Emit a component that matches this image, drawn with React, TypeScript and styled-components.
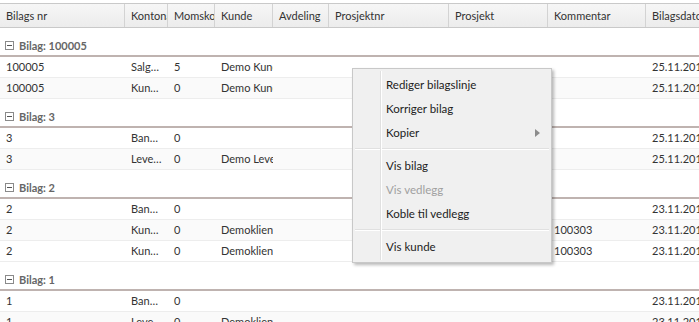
import React from 'react';
import styled, { createGlobalStyle, css } from 'styled-components';

const GlobalStyle = createGlobalStyle`
  html, body {
    margin: 0;
    padding: 0;
    background: #ffffff;
    overflow: hidden;
  }
  body {
    font-family: Lato, "Noto Sans", "Liberation Sans", sans-serif;
    font-size: 11px;
    color: #333333;
  }
`;

interface Column {
  key: string;
  title: string;
  width: number;
  ellipsis?: boolean;
}

const columns: Column[] = [
  { key: 'nr', title: 'Bilags nr', width: 125 },
  { key: 'konto', title: 'Kontonavn', width: 43, ellipsis: true },
  { key: 'mva', title: 'Momskode', width: 47 },
  { key: 'kunde', title: 'Kunde', width: 58 },
  { key: 'avd', title: 'Avdeling', width: 56 },
  { key: 'prnr', title: 'Prosjektnr', width: 120 },
  { key: 'pr', title: 'Prosjekt', width: 99 },
  { key: 'komm', title: 'Kommentar', width: 98 },
  { key: 'dato', title: 'Bilagsdato', width: 110 },
];

type Row = Partial<Record<string, string>>;

interface Group {
  id: string;
  rows: Row[];
}

const groups: Group[] = [
  {
    id: '100005',
    rows: [
      { nr: '100005', konto: 'Salgsinntekt', mva: '5', kunde: 'Demo Kunde AS', dato: '25.11.2015' },
      { nr: '100005', konto: 'Kundefordringer', mva: '0', kunde: 'Demo Kunde AS', dato: '25.11.2015' },
    ],
  },
  {
    id: '3',
    rows: [
      { nr: '3', konto: 'Bankinnskudd', mva: '0', dato: '25.11.2015' },
      { nr: '3', konto: 'Leverandørgjeld', mva: '0', kunde: 'Demo Leverandør', dato: '25.11.2015' },
    ],
  },
  {
    id: '2',
    rows: [
      { nr: '2', konto: 'Bankinnskudd', mva: '0', dato: '23.11.2015' },
      { nr: '2', konto: 'Kundefordringer', mva: '0', kunde: 'Demoklient', komm: '100303', dato: '23.11.2015' },
      { nr: '2', konto: 'Kundefordringer', mva: '0', kunde: 'Demoklient', komm: '100303', dato: '23.11.2015' },
    ],
  },
  {
    id: '1',
    rows: [
      { nr: '1', konto: 'Bankinnskudd', mva: '0', dato: '23.11.2015' },
      { nr: '1', konto: 'Leverandørgjeld', mva: '0', kunde: 'Demoklient', dato: '23.11.2015' },
    ],
  },
];

const totalWidth = columns.reduce((sum, c) => sum + c.width, 0);

const Page = styled.div`
  position: relative;
  width: 699px;
  height: 322px;
  overflow: hidden;
  padding-top: 3px;
  box-sizing: border-box;
`;

const Grid = styled.div`
  width: ${totalWidth}px;
`;

const HeaderRow = styled.div`
  display: flex;
  height: 23px;
  border-top: 1px solid #c9c9c9;
  border-bottom: 1px solid #c9c9c9;
  background: linear-gradient(#f6f6f6, #ececec);
`;

const HeaderCell = styled.div<{ $width: number }>`
  flex: 0 0 ${({ $width }) => $width}px;
  box-sizing: border-box;
  padding: 0 6px;
  line-height: 23px;
  border-right: 1px solid #d3d3d3;
  white-space: nowrap;
  overflow: hidden;
  color: #333333;
`;

const GroupHeader = styled.div`
  display: flex;
  align-items: center;
  gap: 5px;
  height: 14px;
  padding: 10px 0 3px 5px;
  border-bottom: 2px solid #bfb3b0;
  font-weight: bold;
  color: #666666;
`;

const CollapseIcon = styled.span`
  position: relative;
  width: 7px;
  height: 7px;
  border: 1px solid #8a8a8a;
  background: #ffffff;

  &::after {
    content: '';
    position: absolute;
    left: 1px;
    right: 1px;
    top: 3px;
    height: 1px;
    background: #555555;
  }
`;

const DataRow = styled.div<{ $alt: boolean }>`
  display: flex;
  height: 20px;
  border-bottom: 1px solid #ededed;
  background: ${({ $alt }) => ($alt ? '#fafafa' : '#ffffff')};
`;

const Cell = styled.div<{ $width: number; $ellipsis?: boolean }>`
  flex: 0 0 ${({ $width }) => $width}px;
  box-sizing: border-box;
  padding: 0 6px;
  line-height: 20px;
  white-space: nowrap;
  overflow: hidden;
  ${({ $ellipsis }) =>
    $ellipsis &&
    css`
      text-overflow: ellipsis;
    `}
`;

const Menu = styled.div`
  position: absolute;
  left: 352px;
  top: 68px;
  width: 198px;
  padding: 4px 0 3px;
  background: #f0f0f0;
  border: 1px solid #c8c8c8;
  box-shadow: 2px 2px 3px rgba(0, 0, 0, 0.28);

  &::before {
    content: '';
    position: absolute;
    left: 27px;
    top: 2px;
    bottom: 2px;
    width: 1px;
    background: #e0e0e0;
    border-right: 1px solid #ffffff;
  }
`;

const MenuItem = styled.div<{ $disabled?: boolean }>`
  position: relative;
  height: 24px;
  line-height: 24px;
  padding-left: 33px;
  font-size: 11.5px;
  color: ${({ $disabled }) => ($disabled ? '#a0a0a0' : '#222222')};
`;

const SubArrow = styled.span`
  position: absolute;
  right: 11px;
  top: 8px;
  width: 0;
  height: 0;
  border-top: 4px solid transparent;
  border-bottom: 4px solid transparent;
  border-left: 5px solid #8c8c8c;
`;

const MenuSeparator = styled.div`
  height: 1px;
  margin: 3px 2px 4px 2px;
  background: #e0e0e0;
  border-bottom: 1px solid #ffffff;
`;

const App: React.FC = () => {
  return (
    <Page>
      <GlobalStyle />
      <Grid>
        <HeaderRow>
          {columns.map((col) => (
            <HeaderCell key={col.key} $width={col.width}>
              {col.title}
            </HeaderCell>
          ))}
        </HeaderRow>
        {groups.map((group) => (
          <div key={group.id}>
            <GroupHeader>
              <CollapseIcon />
              Bilag: {group.id}
            </GroupHeader>
            {group.rows.map((row, i) => (
              <DataRow key={i} $alt={i % 2 === 1}>
                {columns.map((col) => (
                  <Cell key={col.key} $width={col.width} $ellipsis={col.ellipsis}>
                    {row[col.key] ?? ''}
                  </Cell>
                ))}
              </DataRow>
            ))}
          </div>
        ))}
      </Grid>
      <Menu>
        <MenuItem>Rediger bilagslinje</MenuItem>
        <MenuItem>Korriger bilag</MenuItem>
        <MenuItem>
          Kopier
          <SubArrow />
        </MenuItem>
        <MenuSeparator />
        <MenuItem>Vis bilag</MenuItem>
        <MenuItem $disabled>Vis vedlegg</MenuItem>
        <MenuItem>Koble til vedlegg</MenuItem>
        <MenuSeparator />
        <MenuItem>Vis kunde</MenuItem>
      </Menu>
    </Page>
  );
};

export default App;
